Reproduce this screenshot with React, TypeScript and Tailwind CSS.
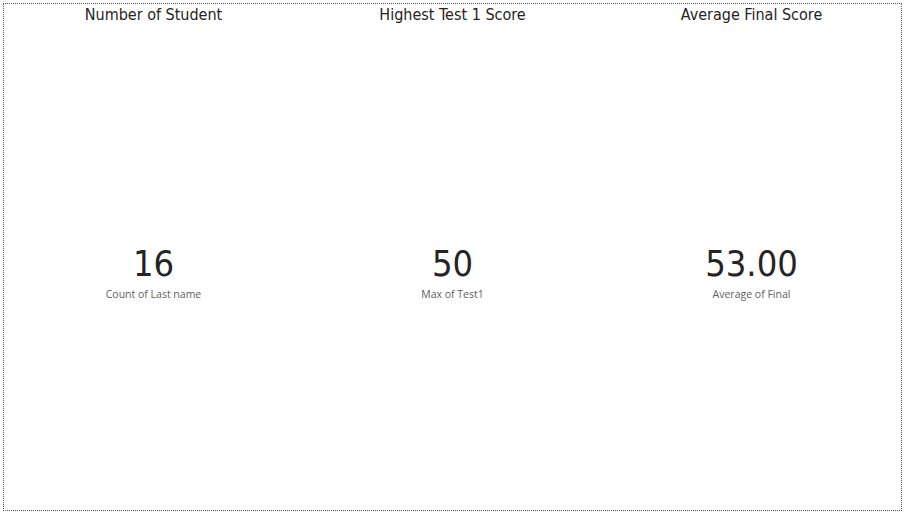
export default function App() {
  const cards = [
    { title: "Number of Student", value: "16", label: "Count of Last name" },
    { title: "Highest Test 1 Score", value: "50", label: "Max of Test1" },
    { title: "Average Final Score", value: "53.00", label: "Average of Final" },
  ];
  return (
    <div className="w-[906px] h-[514px] bg-white pt-[3px] pl-[3px]">
      <div className="w-[899px] h-[508px] border border-dotted border-[#555555] grid grid-cols-3">
        {cards.map((c) => (
          <div key={c.title} className="flex flex-col items-center">
            <div
              className="mt-[1px] text-[16px] leading-[20px] text-[#252423]"
              style={{ fontFamily: '"DejaVu Sans Condensed", "Liberation Sans Narrow", sans-serif' }}
            >
              {c.title}
            </div>
            <div
              className="mt-[221px] text-[36px] leading-[36px] text-[#252423]"
              style={{ fontFamily: '"DejaVu Sans Condensed", "Liberation Sans Narrow", sans-serif' }}
            >
              {c.value}
            </div>
            <div
              className="mt-[5px] text-[10.5px] leading-[14px] text-[#605E5C]"
              style={{ fontFamily: '"Open Sans", "Noto Sans", sans-serif' }}
            >
              {c.label}
            </div>
          </div>
        ))}
      </div>
    </div>
  );
}
